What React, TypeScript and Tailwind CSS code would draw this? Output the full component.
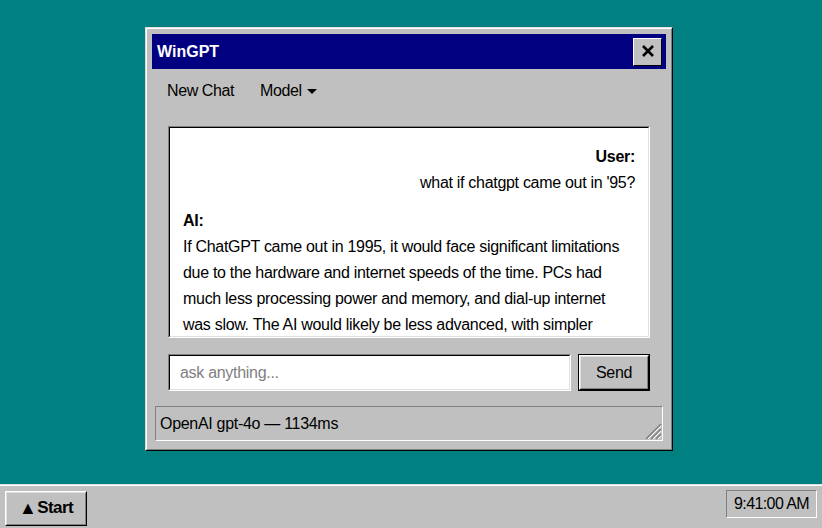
import React, { useState } from "react"

const font = { fontFamily: '"Liberation Sans", Arial, sans-serif' }

const aiText =
    "If ChatGPT came out in 1995, it would face significant limitations due to the hardware and internet speeds of the time. PCs had much less processing power and memory, and dial-up internet was slow. The AI would likely be less advanced, with simpler responses and slower replies, and it would probably run on a remote server accessed by modem."

const App = () => {
    const [input, setInput] = useState("")

    return (
        <div className="w-[822px] h-[528px] bg-[#008080] flex flex-col overflow-hidden text-black" style={font}>
            <div className="flex-1 pl-[145px] pt-[27px]">
                {/* window */}
                <div className="w-[528px] bg-[#c0c0c0] border border-t-[#dfdfdf] border-l-[#dfdfdf] border-r-black border-b-black">
                    <div className="border border-t-white border-l-white border-r-[#808080] border-b-[#808080] p-[5px] pb-[8px]">
                        <div className="h-[35px] bg-[#000080] flex items-center justify-between pl-[5px] pr-[4px]">
                            <span className="text-white font-bold text-[16px]">WinGPT</span>
                            <button className="w-[29px] h-[28px] bg-[#c0c0c0] border border-t-white border-l-white border-r-black border-b-black flex items-center justify-center">
                                <svg width="14" height="13" viewBox="0 0 14 13">
                                    <path d="M2 1 L12 11 M12 1 L2 11" stroke="black" strokeWidth="2.6" />
                                </svg>
                            </button>
                        </div>

                        <div className="flex gap-[26px] px-[15px] h-[44px] items-center text-[16px] tracking-[-0.4px]">
                            <span>New Chat</span>
                            <span className="flex items-center gap-[5px]">
                                Model
                                <svg width="10" height="5" viewBox="0 0 10 5">
                                    <path d="M0 0 L10 0 L5 5 Z" fill="black" />
                                </svg>
                            </span>
                        </div>

                        <div className="mx-[16px] mt-[13px] h-[212px] border border-t-[#808080] border-l-[#808080] border-r-white border-b-white">
                            <div className="h-full bg-white border border-t-black border-l-black border-r-[#dfdfdf] border-b-[#dfdfdf] overflow-hidden px-[13px] pt-[16px] text-[16px] leading-[26px] tracking-[-0.3px]">
                                <div className="text-right">
                                    <div className="font-bold">User:</div>
                                    <div>what if chatgpt came out in '95?</div>
                                </div>
                                <div className="mt-[12px]">
                                    <div className="font-bold">AI:</div>
                                    <p>{aiText}</p>
                                </div>
                            </div>
                        </div>

                        <div className="mx-[16px] mt-[16px] flex gap-[7px]">
                            <div className="flex-1 h-[37px] border border-t-[#808080] border-l-[#808080] border-r-white border-b-white">
                                <input
                                    value={input}
                                    onChange={(e) => setInput(e.target.value)}
                                    placeholder="ask anything..."
                                    className="w-full h-full bg-white border border-t-black border-l-black border-r-[#dfdfdf] border-b-[#dfdfdf] px-[10px] text-[16px] tracking-[-0.3px] outline-none placeholder:text-[#808080]"
                                    style={font}
                                />
                            </div>
                            <button className="w-[72px] h-[37px] border border-black bg-[#c0c0c0]">
                                <div className="h-full border border-t-white border-l-white border-r-black border-b-black">
                                    <div className="h-full border border-t-[#dfdfdf] border-l-[#dfdfdf] border-r-[#808080] border-b-[#808080] flex items-center justify-center text-[16px] tracking-[-0.3px]">
                                        Send
                                    </div>
                                </div>
                            </button>
                        </div>

                        <div className="mx-[3px] mt-[15px] h-[35px] border border-t-[#808080] border-l-[#808080] border-r-white border-b-white flex items-center justify-between pl-[4px] text-[16px] tracking-[-0.3px]">
                            <span>OpenAI gpt-4o — 1134ms</span>
                            <svg width="20" height="20" viewBox="0 0 20 20" className="self-end">
                                <path d="M19 4 L4 19 M19 9 L9 19 M19 14 L14 19" stroke="#808080" strokeWidth="1.5" />
                                <path d="M19 6 L6 19 M19 11 L11 19 M19 16 L16 19" stroke="white" strokeWidth="1" />
                            </svg>
                        </div>
                    </div>
                </div>
            </div>

            {/* taskbar */}
            <div className="h-[44px] bg-[#c0c0c0] border-t border-t-[#dfdfdf] shadow-[inset_0_1px_0_#ffffff] flex items-center justify-between pl-[5px] pr-[4px]">
                <button className="h-[35px] w-[82px] mt-[3px] border border-t-white border-l-white border-r-black border-b-black">
                    <div className="h-full border border-t-[#dfdfdf] border-l-[#dfdfdf] border-r-[#808080] border-b-[#808080] flex items-center justify-center gap-[1px] font-bold text-[17px] tracking-[-0.6px]">
                        <span className="text-[18px] leading-none">▲</span>Start
                    </div>
                </button>
                <div className="h-[28px] w-[91px] border border-t-[#808080] border-l-[#808080] border-r-white border-b-white flex items-center justify-center text-[16px] tracking-[-0.6px] mb-[5px] mr-[1px]">
                    9:41:00 AM
                </div>
            </div>
        </div>
    )
}

export default App
